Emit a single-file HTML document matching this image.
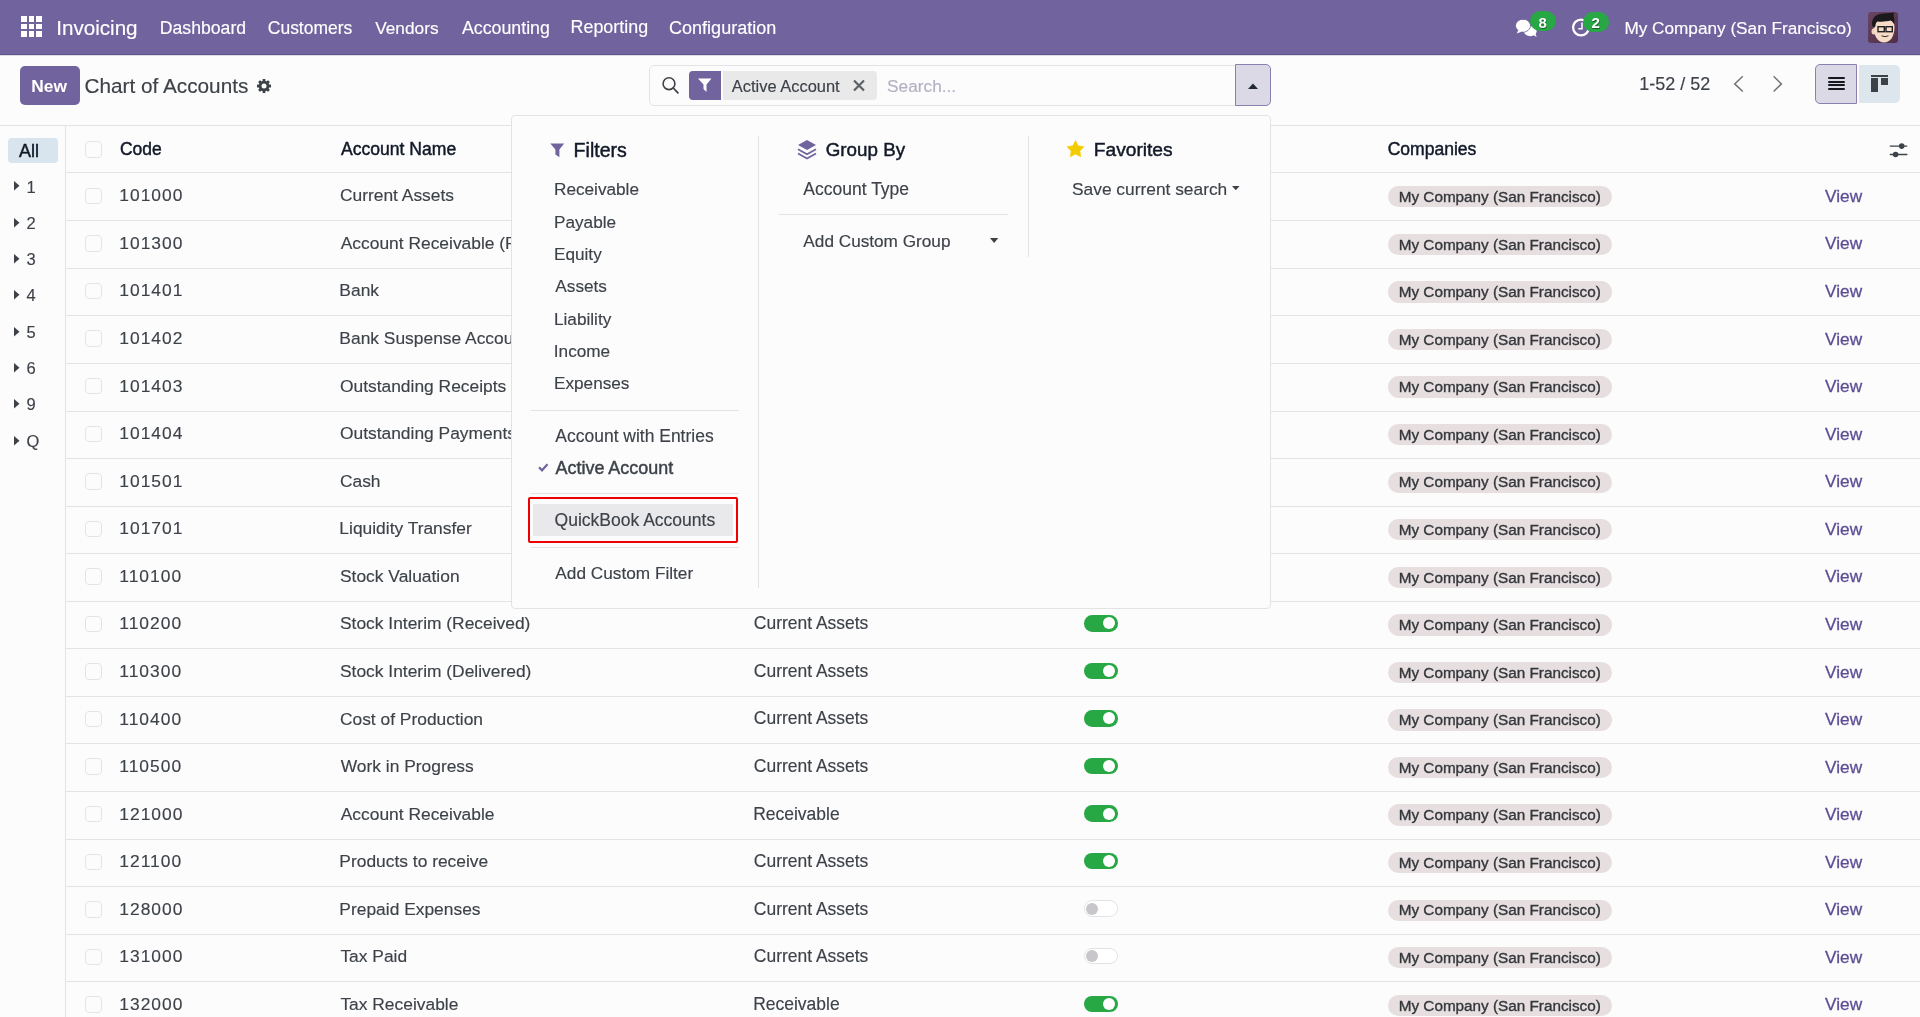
<!DOCTYPE html><html><head><meta charset="utf-8"><style>
html,body{margin:0;padding:0;}
body{width:1920px;height:1017px;overflow:hidden;position:relative;background:#fcfcfc;font-family:"Liberation Sans",sans-serif;}
.t{position:absolute;line-height:1;white-space:nowrap;}
.s{-webkit-text-stroke:0.15px currentColor;}
#root{position:absolute;left:0;top:0;width:1920px;height:1017px;will-change:transform;}
.r{position:absolute;box-sizing:border-box;}
svg{position:absolute;overflow:visible;}
</style></head><body><div id="root">
<div class="r" style="left:0px;top:0px;width:1920px;height:55px;background:#71639e;border-bottom:1.5px solid #5f5390;"></div>
<div class="r" style="left:0px;top:55px;width:1920px;height:1px;background:#dcdcde;"></div>
<div class="r" style="left:21.3px;top:16.3px;width:5.8px;height:5.8px;background:#fff;"></div>
<div class="r" style="left:21.3px;top:23.700000000000003px;width:5.8px;height:5.8px;background:#fff;"></div>
<div class="r" style="left:21.3px;top:31.1px;width:5.8px;height:5.8px;background:#fff;"></div>
<div class="r" style="left:28.700000000000003px;top:16.3px;width:5.8px;height:5.8px;background:#fff;"></div>
<div class="r" style="left:28.700000000000003px;top:23.700000000000003px;width:5.8px;height:5.8px;background:#fff;"></div>
<div class="r" style="left:28.700000000000003px;top:31.1px;width:5.8px;height:5.8px;background:#fff;"></div>
<div class="r" style="left:36.1px;top:16.3px;width:5.8px;height:5.8px;background:#fff;"></div>
<div class="r" style="left:36.1px;top:23.700000000000003px;width:5.8px;height:5.8px;background:#fff;"></div>
<div class="r" style="left:36.1px;top:31.1px;width:5.8px;height:5.8px;background:#fff;"></div>
<div class="t s" style="left:56.19px;top:17.74px;font-size:20.63px;color:#fff;font-weight:400;">Invoicing</div>
<div class="t s" style="left:159.84px;top:19.67px;font-size:17.64px;color:#fff;font-weight:400;">Dashboard</div>
<div class="t s" style="left:267.83px;top:19.81px;font-size:17.47px;color:#fff;font-weight:400;">Customers</div>
<div class="t s" style="left:375.21px;top:19.98px;font-size:17.27px;color:#fff;font-weight:400;">Vendors</div>
<div class="t s" style="left:461.96px;top:19.56px;font-size:17.77px;color:#fff;font-weight:400;">Accounting</div>
<div class="t s" style="left:570.52px;top:19.45px;font-size:17.9px;color:#fff;font-weight:400;">Reporting</div>
<div class="t s" style="left:669.1px;top:19.36px;font-size:18.0px;color:#fff;font-weight:400;">Configuration</div>
<svg style="left:1515px;top:17px" width="23" height="21" viewBox="0 0 23 21">
<ellipse cx="15.300" cy="14.200" rx="6.300" ry="5" fill="#fff"/>
<path d="M17.500 17.500L21.700 19.900 20.200 16z" fill="#fff"/>
<ellipse cx="8" cy="8.700" rx="7.400" ry="6.400" fill="#fff" stroke="#71639e" stroke-width="0.900"/>
<path d="M3.300 13.200L1.700 16.600 7 14.600z" fill="#fff"/>
<ellipse cx="8" cy="8.700" rx="6.800" ry="5.800" fill="#fff"/>
</svg>
<div class="r" style="left:1530px;top:11px;width:26px;height:20px;background:#28a745;border-radius:10px;"></div>
<div class="t" style="left:1538.51px;top:14.68px;font-size:15.03px;color:#fff;font-weight:700;text-shadow:0.6px 0.9px 0 #155d27;">8</div>
<svg style="left:1572px;top:18px" width="19" height="19" viewBox="0 0 19 19">
<circle cx="9" cy="9.500" r="7.900" fill="none" stroke="#fff" stroke-width="2.300"/>
<path d="M10 4.400v6.300H6.300" fill="none" stroke="#fff" stroke-width="1.500"/>
</svg>
<div class="r" style="left:1583px;top:12px;width:25.5px;height:20px;background:#28a745;border-radius:10px;"></div>
<div class="t" style="left:1591.48px;top:15.00px;font-size:15.0px;color:#fff;font-weight:700;text-shadow:0.6px 0.9px 0 #155d27;">2</div>
<div class="t s" style="left:1624.38px;top:20.14px;font-size:17.2px;color:#fff;font-weight:400;">My Company (San Francisco)</div>
<svg style="left:1868px;top:12px" width="30" height="31" viewBox="0 0 30 31">
<defs><linearGradient id="avg" x1="0" y1="0" x2="1" y2="1"><stop offset="0" stop-color="#6a4562"/><stop offset="1" stop-color="#4f2e45"/></linearGradient></defs>
<rect x="0" y="0" width="30" height="31" rx="3" fill="url(#avg)"/>
<ellipse cx="5.800" cy="19.500" rx="2.300" ry="3" fill="#f1d2bb"/>
<path d="M5.500 14C5.500 9 9 7 16 7s10.500 2 10.500 8c0 9-4 15.500-10.500 15.500S5.500 23 5.500 14z" fill="#f6dcc6"/>
<path d="M4 13C3.500 7 7 3 12 2 17 1 22 1.500 26 0.500L25.500 4C26.500 6 26.500 9 26 12 25 10 24 9 22.500 8.500 19 9.500 14 10 9.500 9.500 8 10.500 7.500 12 7.500 14L6 16C5 15 4.500 14 4 13z" fill="#1b191b"/>
<rect x="10" y="14.700" width="6.300" height="5" fill="none" stroke="#222" stroke-width="1.400"/>
<rect x="18" y="14.700" width="6.300" height="5" fill="none" stroke="#222" stroke-width="1.400"/>
<path d="M16.300 16.500h1.700" stroke="#222" stroke-width="1"/>
<path d="M13.500 23.800q3.500 1.800 7 0" fill="none" stroke="#3a2a2a" stroke-width="1"/>
</svg>
<div class="r" style="left:19.5px;top:66px;width:60.5px;height:38.7px;background:#71639e;border-radius:5px;"></div>
<div class="t" style="left:31.33px;top:78.02px;font-size:17.34px;color:#fff;font-weight:700;">New</div>
<div class="t s" style="left:84.56px;top:75.83px;font-size:20.76px;color:#3d4249;font-weight:400;">Chart of Accounts</div>
<svg style="left:256.800px;top:78.900px" width="14" height="14" viewBox="-7 -7 14 14">
<g fill="#3d4249"><circle r="5.300"/>
<rect x="-1.400" y="-7" width="2.800" height="14" rx="0.500"/>
<rect x="-1.400" y="-7" width="2.800" height="14" rx="0.500" transform="rotate(45)"/>
<rect x="-1.400" y="-7" width="2.800" height="14" rx="0.500" transform="rotate(90)"/>
<rect x="-1.400" y="-7" width="2.800" height="14" rx="0.500" transform="rotate(135)"/></g>
<circle r="2.500" fill="#fcfcfc"/>
</svg>
<div class="r" style="left:649.2px;top:64.5px;width:621.5px;height:41px;border:1px solid #e3e3e5;border-radius:5px;"></div>
<svg style="left:662px;top:77px" width="17" height="17" viewBox="0 0 17 17">
<circle cx="7" cy="6.700" r="5.900" fill="none" stroke="#3d4249" stroke-width="1.600"/>
<path d="M11.300 11l4.600 4.800" stroke="#3d4249" stroke-width="1.800" stroke-linecap="round"/>
</svg>
<div class="r" style="left:688.5px;top:70.6px;width:188.5px;height:29.5px;background:#e9e9ea;border-radius:4px;"></div>
<div class="r" style="left:721.2px;top:70.6px;width:1.8px;height:29.5px;background:#fcfcfc;"></div>
<div class="r" style="left:688.5px;top:70.6px;width:32.7px;height:29.5px;background:#71639e;border-radius:4px 0 0 4px;"></div>
<svg style="left:697px;top:77px" width="16" height="17" viewBox="0 0 16 17">
<path d="M1 1.500h13.500l-5 6v7.500l-3-3v-4.500z" fill="#fff"/>
</svg>
<div class="t s" style="left:731.76px;top:77.76px;font-size:16.47px;color:#3d4249;font-weight:400;">Active Account</div>
<svg style="left:853px;top:80px" width="12" height="11" viewBox="0 0 12 11">
<path d="M1 0.500l10 10M11 0.500l-10 10" stroke="#5d6166" stroke-width="2.2"/>
</svg>
<div class="t s" style="left:887.12px;top:77.60px;font-size:17.25px;color:#b3b0c2;font-weight:400;">Search...</div>
<div class="r" style="left:1235px;top:64.3px;width:35.8px;height:41.4px;background:#dcd9e6;border:1.2px solid #8a80b0;border-radius:0 5px 5px 0;"></div>
<svg style="left:1247.8px;top:82.9px" width="10" height="6" viewBox="0 0 10 6">
<path d="M0 6L5 0.500 10 6z" fill="#1f2937"/>
</svg>
<div class="t s" style="left:1639.25px;top:75.59px;font-size:17.97px;color:#3d4249;font-weight:400;">1-52 / 52</div>
<svg style="left:1733.5px;top:76px" width="10" height="16" viewBox="0 0 10 16">
<path d="M8.800 0.300L0.700 7.900 8.800 15.500" fill="none" stroke="#747474" stroke-width="1.500"/>
</svg>
<svg style="left:1772.500px;top:76px" width="10" height="16" viewBox="0 0 10 16">
<path d="M0.600 0.300L8.400 7.900 0.600 15.500" fill="none" stroke="#747474" stroke-width="1.500"/>
</svg>
<div class="r" style="left:1815px;top:64.4px;width:42px;height:39.4px;background:#dcd9e6;border:1.2px solid #8a80b0;border-radius:5px 0 0 5px;"></div>
<div class="r" style="left:1827.6px;top:77.0px;width:17px;height:1.9px;background:#15191e;border-radius:1px;"></div>
<div class="r" style="left:1827.6px;top:80.65px;width:17px;height:1.9px;background:#15191e;border-radius:1px;"></div>
<div class="r" style="left:1827.6px;top:84.3px;width:17px;height:1.9px;background:#15191e;border-radius:1px;"></div>
<div class="r" style="left:1827.6px;top:87.95px;width:17px;height:1.9px;background:#15191e;border-radius:1px;"></div>
<div class="r" style="left:1858.5px;top:65.3px;width:41.5px;height:37.7px;background:#dde5ed;border-radius:0 5px 5px 0;"></div>
<div class="r" style="left:1871px;top:75px;width:17.3px;height:1.5px;background:#3d4249;"></div>
<div class="r" style="left:1871px;top:77.5px;width:7px;height:14.5px;background:#3d4249;"></div>
<div class="r" style="left:1880.5px;top:77.5px;width:7.8px;height:7.5px;background:#3d4249;"></div>
<div class="r" style="left:0px;top:125px;width:1920px;height:1px;background:#e3e3e5;"></div>
<div class="r" style="left:65px;top:125px;width:1px;height:900px;background:#e3e3e5;"></div>
<div class="r" style="left:8.1px;top:138.1px;width:49.8px;height:24.6px;background:#d8e4ee;border-radius:4px;"></div>
<div class="t" style="left:19.08px;top:142.07px;font-size:17.99px;color:#111827;font-weight:400;-webkit-text-stroke:0.45px #111827;">All</div>
<svg style="left:14px;top:181.40px" width="6" height="10" viewBox="0 0 6 10"><path d="M0 0l5.500 4.700L0 9.400z" fill="#3d4249"/></svg>
<div class="t s" style="left:26.5px;top:178.53px;font-size:16.5px;color:#3d4249;font-weight:400;">1</div>
<svg style="left:14px;top:217.70px" width="6" height="10" viewBox="0 0 6 10"><path d="M0 0l5.500 4.700L0 9.400z" fill="#3d4249"/></svg>
<div class="t s" style="left:26.5px;top:214.83px;font-size:16.5px;color:#3d4249;font-weight:400;">2</div>
<svg style="left:14px;top:254.00px" width="6" height="10" viewBox="0 0 6 10"><path d="M0 0l5.500 4.700L0 9.400z" fill="#3d4249"/></svg>
<div class="t s" style="left:26.5px;top:251.13px;font-size:16.5px;color:#3d4249;font-weight:400;">3</div>
<svg style="left:14px;top:290.30px" width="6" height="10" viewBox="0 0 6 10"><path d="M0 0l5.500 4.700L0 9.400z" fill="#3d4249"/></svg>
<div class="t s" style="left:26.5px;top:287.43px;font-size:16.5px;color:#3d4249;font-weight:400;">4</div>
<svg style="left:14px;top:326.60px" width="6" height="10" viewBox="0 0 6 10"><path d="M0 0l5.500 4.700L0 9.400z" fill="#3d4249"/></svg>
<div class="t s" style="left:26.5px;top:323.73px;font-size:16.5px;color:#3d4249;font-weight:400;">5</div>
<svg style="left:14px;top:362.90px" width="6" height="10" viewBox="0 0 6 10"><path d="M0 0l5.500 4.700L0 9.400z" fill="#3d4249"/></svg>
<div class="t s" style="left:26.5px;top:360.03px;font-size:16.5px;color:#3d4249;font-weight:400;">6</div>
<svg style="left:14px;top:399.20px" width="6" height="10" viewBox="0 0 6 10"><path d="M0 0l5.500 4.700L0 9.400z" fill="#3d4249"/></svg>
<div class="t s" style="left:26.5px;top:396.33px;font-size:16.5px;color:#3d4249;font-weight:400;">9</div>
<svg style="left:14px;top:435.50px" width="6" height="10" viewBox="0 0 6 10"><path d="M0 0l5.500 4.700L0 9.400z" fill="#3d4249"/></svg>
<div class="t s" style="left:26.5px;top:432.63px;font-size:16.5px;color:#3d4249;font-weight:400;">Q</div>
<div class="r" style="left:66px;top:172.2px;width:1854px;height:1px;background:#e3e3e5;"></div>
<div class="r" style="left:85px;top:141px;width:16.5px;height:16.5px;border:1px solid #e4e4e6;border-radius:4px;"></div>
<div class="t" style="left:119.95px;top:141.30px;font-size:17.48px;color:#111827;font-weight:400;-webkit-text-stroke:0.45px #111827;">Code</div>
<div class="t" style="left:340.98px;top:141.23px;font-size:17.57px;color:#111827;font-weight:400;-webkit-text-stroke:0.45px #111827;">Account Name</div>
<div class="t" style="left:754.7px;top:142.22px;font-size:16.4px;color:#111827;font-weight:700;">Type</div>
<div class="t" style="left:1083px;top:142.22px;font-size:16.4px;color:#111827;font-weight:700;">Allow Reconciliation</div>
<div class="t" style="left:1387.64px;top:141.24px;font-size:17.55px;color:#111827;font-weight:400;-webkit-text-stroke:0.45px #111827;">Companies</div>
<svg style="left:1890px;top:142.500px" width="17.500" height="15" viewBox="0 0 17.500 15">
<path d="M0.300 3.100h16.500M0.300 11.500h16.500" stroke="#3d4249" stroke-width="1.400" stroke-linecap="round"/>
<circle cx="11.700" cy="3.100" r="2.800" fill="#3d4249"/><circle cx="5.600" cy="11.500" r="2.800" fill="#3d4249"/>
</svg>
<div class="r" style="left:66px;top:220.26px;width:1854px;height:1px;background:#e3e3e5;"></div>
<div class="r" style="left:85px;top:187.7px;width:16.5px;height:16.5px;border:1px solid #e4e4e6;border-radius:4px;"></div>
<div class="t s" style="left:119.29px;top:187.37px;font-size:17.4px;color:#3d4249;font-weight:400;letter-spacing:1.02px;">101000</div>
<div class="t s" style="left:339.93px;top:187.37px;font-size:17.4px;color:#3d4249;font-weight:400;">Current Assets</div>
<div class="t s" style="left:753.83px;top:187.33px;font-size:17.45px;color:#3d4249;font-weight:400;">Current Assets</div>
<div class="r" style="left:1083.7px;top:187.0px;width:34px;height:16.5px;background:#28a745;border-radius:8.25px;"></div>
<div class="r" style="left:1103.3px;top:189.25px;width:12px;height:12px;background:#fff;border-radius:50%;"></div>
<div class="r" style="left:1388.3px;top:186.2px;width:224px;height:21.3px;background:#e7dfdf;border-radius:11px;"></div>
<div class="t s" style="left:1398.74px;top:189.06px;font-size:15.29px;color:#33373c;font-weight:400;-webkit-text-stroke:0.35px #33373c;">My Company (San Francisco)</div>
<div class="t s" style="left:1825.11px;top:187.91px;font-size:17.23px;color:#5d4d95;font-weight:400;-webkit-text-stroke:0.3px #5d4d95;">View</div>
<div class="r" style="left:66px;top:267.82px;width:1854px;height:1px;background:#e3e3e5;"></div>
<div class="r" style="left:85px;top:235.26px;width:16.5px;height:16.5px;border:1px solid #e4e4e6;border-radius:4px;"></div>
<div class="t s" style="left:119.29px;top:234.93px;font-size:17.4px;color:#3d4249;font-weight:400;letter-spacing:1.02px;">101300</div>
<div class="t s" style="left:340.76px;top:234.93px;font-size:17.4px;color:#3d4249;font-weight:400;">Account Receivable (PoS)</div>
<div class="t s" style="left:753.26px;top:234.89px;font-size:17.45px;color:#3d4249;font-weight:400;">Receivable</div>
<div class="r" style="left:1083.7px;top:234.56px;width:34px;height:16.5px;background:#28a745;border-radius:8.25px;"></div>
<div class="r" style="left:1103.3px;top:236.81px;width:12px;height:12px;background:#fff;border-radius:50%;"></div>
<div class="r" style="left:1388.3px;top:233.76px;width:224px;height:21.3px;background:#e7dfdf;border-radius:11px;"></div>
<div class="t s" style="left:1398.74px;top:236.62px;font-size:15.29px;color:#33373c;font-weight:400;-webkit-text-stroke:0.35px #33373c;">My Company (San Francisco)</div>
<div class="t s" style="left:1825.11px;top:235.47px;font-size:17.23px;color:#5d4d95;font-weight:400;-webkit-text-stroke:0.3px #5d4d95;">View</div>
<div class="r" style="left:66px;top:315.38px;width:1854px;height:1px;background:#e3e3e5;"></div>
<div class="r" style="left:85px;top:282.82px;width:16.5px;height:16.5px;border:1px solid #e4e4e6;border-radius:4px;"></div>
<div class="t s" style="left:119.29px;top:282.49px;font-size:17.4px;color:#3d4249;font-weight:400;letter-spacing:1.02px;">101401</div>
<div class="t s" style="left:339.36px;top:282.49px;font-size:17.4px;color:#3d4249;font-weight:400;">Bank</div>
<div class="t s" style="left:753.26px;top:282.45px;font-size:17.45px;color:#3d4249;font-weight:400;">Bank and Cash</div>
<div class="r" style="left:1083.7px;top:282.12px;width:34px;height:16.5px;background:#28a745;border-radius:8.25px;"></div>
<div class="r" style="left:1103.3px;top:284.37px;width:12px;height:12px;background:#fff;border-radius:50%;"></div>
<div class="r" style="left:1388.3px;top:281.32px;width:224px;height:21.3px;background:#e7dfdf;border-radius:11px;"></div>
<div class="t s" style="left:1398.74px;top:284.18px;font-size:15.29px;color:#33373c;font-weight:400;-webkit-text-stroke:0.35px #33373c;">My Company (San Francisco)</div>
<div class="t s" style="left:1825.11px;top:283.03px;font-size:17.23px;color:#5d4d95;font-weight:400;-webkit-text-stroke:0.3px #5d4d95;">View</div>
<div class="r" style="left:66px;top:362.94px;width:1854px;height:1px;background:#e3e3e5;"></div>
<div class="r" style="left:85px;top:330.38px;width:16.5px;height:16.5px;border:1px solid #e4e4e6;border-radius:4px;"></div>
<div class="t s" style="left:119.29px;top:330.05px;font-size:17.4px;color:#3d4249;font-weight:400;letter-spacing:1.02px;">101402</div>
<div class="t s" style="left:339.36px;top:330.05px;font-size:17.4px;color:#3d4249;font-weight:400;">Bank Suspense Account</div>
<div class="t s" style="left:753.83px;top:330.01px;font-size:17.45px;color:#3d4249;font-weight:400;">Current Assets</div>
<div class="r" style="left:1083.7px;top:329.68px;width:34px;height:16.5px;background:#28a745;border-radius:8.25px;"></div>
<div class="r" style="left:1103.3px;top:331.93px;width:12px;height:12px;background:#fff;border-radius:50%;"></div>
<div class="r" style="left:1388.3px;top:328.88px;width:224px;height:21.3px;background:#e7dfdf;border-radius:11px;"></div>
<div class="t s" style="left:1398.74px;top:331.74px;font-size:15.29px;color:#33373c;font-weight:400;-webkit-text-stroke:0.35px #33373c;">My Company (San Francisco)</div>
<div class="t s" style="left:1825.11px;top:330.59px;font-size:17.23px;color:#5d4d95;font-weight:400;-webkit-text-stroke:0.3px #5d4d95;">View</div>
<div class="r" style="left:66px;top:410.5px;width:1854px;height:1px;background:#e3e3e5;"></div>
<div class="r" style="left:85px;top:377.94px;width:16.5px;height:16.5px;border:1px solid #e4e4e6;border-radius:4px;"></div>
<div class="t s" style="left:119.29px;top:377.61px;font-size:17.4px;color:#3d4249;font-weight:400;letter-spacing:1.02px;">101403</div>
<div class="t s" style="left:339.97px;top:377.61px;font-size:17.4px;color:#3d4249;font-weight:400;">Outstanding Receipts</div>
<div class="t s" style="left:753.83px;top:377.57px;font-size:17.45px;color:#3d4249;font-weight:400;">Current Assets</div>
<div class="r" style="left:1083.7px;top:377.24px;width:34px;height:16.5px;background:#28a745;border-radius:8.25px;"></div>
<div class="r" style="left:1103.3px;top:379.49px;width:12px;height:12px;background:#fff;border-radius:50%;"></div>
<div class="r" style="left:1388.3px;top:376.44px;width:224px;height:21.3px;background:#e7dfdf;border-radius:11px;"></div>
<div class="t s" style="left:1398.74px;top:379.30px;font-size:15.29px;color:#33373c;font-weight:400;-webkit-text-stroke:0.35px #33373c;">My Company (San Francisco)</div>
<div class="t s" style="left:1825.11px;top:378.15px;font-size:17.23px;color:#5d4d95;font-weight:400;-webkit-text-stroke:0.3px #5d4d95;">View</div>
<div class="r" style="left:66px;top:458.06px;width:1854px;height:1px;background:#e3e3e5;"></div>
<div class="r" style="left:85px;top:425.5px;width:16.5px;height:16.5px;border:1px solid #e4e4e6;border-radius:4px;"></div>
<div class="t s" style="left:119.29px;top:425.17px;font-size:17.4px;color:#3d4249;font-weight:400;letter-spacing:1.02px;">101404</div>
<div class="t s" style="left:339.97px;top:425.17px;font-size:17.4px;color:#3d4249;font-weight:400;">Outstanding Payments</div>
<div class="t s" style="left:753.83px;top:425.13px;font-size:17.45px;color:#3d4249;font-weight:400;">Current Assets</div>
<div class="r" style="left:1083.7px;top:424.8px;width:34px;height:16.5px;background:#28a745;border-radius:8.25px;"></div>
<div class="r" style="left:1103.3px;top:427.05px;width:12px;height:12px;background:#fff;border-radius:50%;"></div>
<div class="r" style="left:1388.3px;top:424.0px;width:224px;height:21.3px;background:#e7dfdf;border-radius:11px;"></div>
<div class="t s" style="left:1398.74px;top:426.86px;font-size:15.29px;color:#33373c;font-weight:400;-webkit-text-stroke:0.35px #33373c;">My Company (San Francisco)</div>
<div class="t s" style="left:1825.11px;top:425.71px;font-size:17.23px;color:#5d4d95;font-weight:400;-webkit-text-stroke:0.3px #5d4d95;">View</div>
<div class="r" style="left:66px;top:505.62px;width:1854px;height:1px;background:#e3e3e5;"></div>
<div class="r" style="left:85px;top:473.06px;width:16.5px;height:16.5px;border:1px solid #e4e4e6;border-radius:4px;"></div>
<div class="t s" style="left:119.29px;top:472.73px;font-size:17.4px;color:#3d4249;font-weight:400;letter-spacing:1.02px;">101501</div>
<div class="t s" style="left:339.93px;top:472.73px;font-size:17.4px;color:#3d4249;font-weight:400;">Cash</div>
<div class="t s" style="left:753.26px;top:472.69px;font-size:17.45px;color:#3d4249;font-weight:400;">Bank and Cash</div>
<div class="r" style="left:1083.7px;top:472.36px;width:34px;height:16.5px;background:#28a745;border-radius:8.25px;"></div>
<div class="r" style="left:1103.3px;top:474.61px;width:12px;height:12px;background:#fff;border-radius:50%;"></div>
<div class="r" style="left:1388.3px;top:471.56px;width:224px;height:21.3px;background:#e7dfdf;border-radius:11px;"></div>
<div class="t s" style="left:1398.74px;top:474.42px;font-size:15.29px;color:#33373c;font-weight:400;-webkit-text-stroke:0.35px #33373c;">My Company (San Francisco)</div>
<div class="t s" style="left:1825.11px;top:473.27px;font-size:17.23px;color:#5d4d95;font-weight:400;-webkit-text-stroke:0.3px #5d4d95;">View</div>
<div class="r" style="left:66px;top:553.1800000000001px;width:1854px;height:1px;background:#e3e3e5;"></div>
<div class="r" style="left:85px;top:520.62px;width:16.5px;height:16.5px;border:1px solid #e4e4e6;border-radius:4px;"></div>
<div class="t s" style="left:119.29px;top:520.29px;font-size:17.4px;color:#3d4249;font-weight:400;letter-spacing:1.02px;">101701</div>
<div class="t s" style="left:339.36px;top:520.29px;font-size:17.4px;color:#3d4249;font-weight:400;">Liquidity Transfer</div>
<div class="t s" style="left:753.83px;top:520.25px;font-size:17.45px;color:#3d4249;font-weight:400;">Current Assets</div>
<div class="r" style="left:1083.7px;top:519.92px;width:34px;height:16.5px;background:#28a745;border-radius:8.25px;"></div>
<div class="r" style="left:1103.3px;top:522.17px;width:12px;height:12px;background:#fff;border-radius:50%;"></div>
<div class="r" style="left:1388.3px;top:519.12px;width:224px;height:21.3px;background:#e7dfdf;border-radius:11px;"></div>
<div class="t s" style="left:1398.74px;top:521.98px;font-size:15.29px;color:#33373c;font-weight:400;-webkit-text-stroke:0.35px #33373c;">My Company (San Francisco)</div>
<div class="t s" style="left:1825.11px;top:520.83px;font-size:17.23px;color:#5d4d95;font-weight:400;-webkit-text-stroke:0.3px #5d4d95;">View</div>
<div class="r" style="left:66px;top:600.74px;width:1854px;height:1px;background:#e3e3e5;"></div>
<div class="r" style="left:85px;top:568.1800000000001px;width:16.5px;height:16.5px;border:1px solid #e4e4e6;border-radius:4px;"></div>
<div class="t s" style="left:119.29px;top:567.85px;font-size:17.4px;color:#3d4249;font-weight:400;letter-spacing:1.02px;">110100</div>
<div class="t s" style="left:340.02px;top:567.85px;font-size:17.4px;color:#3d4249;font-weight:400;">Stock Valuation</div>
<div class="t s" style="left:753.83px;top:567.81px;font-size:17.45px;color:#3d4249;font-weight:400;">Current Assets</div>
<div class="r" style="left:1083.7px;top:567.48px;width:34px;height:16.5px;background:#28a745;border-radius:8.25px;"></div>
<div class="r" style="left:1103.3px;top:569.73px;width:12px;height:12px;background:#fff;border-radius:50%;"></div>
<div class="r" style="left:1388.3px;top:566.6800000000001px;width:224px;height:21.3px;background:#e7dfdf;border-radius:11px;"></div>
<div class="t s" style="left:1398.74px;top:569.54px;font-size:15.29px;color:#33373c;font-weight:400;-webkit-text-stroke:0.35px #33373c;">My Company (San Francisco)</div>
<div class="t s" style="left:1825.11px;top:568.39px;font-size:17.23px;color:#5d4d95;font-weight:400;-webkit-text-stroke:0.3px #5d4d95;">View</div>
<div class="r" style="left:66px;top:648.3px;width:1854px;height:1px;background:#e3e3e5;"></div>
<div class="r" style="left:85px;top:615.74px;width:16.5px;height:16.5px;border:1px solid #e4e4e6;border-radius:4px;"></div>
<div class="t s" style="left:119.29px;top:615.41px;font-size:17.4px;color:#3d4249;font-weight:400;letter-spacing:1.02px;">110200</div>
<div class="t s" style="left:340.02px;top:615.41px;font-size:17.4px;color:#3d4249;font-weight:400;">Stock Interim (Received)</div>
<div class="t s" style="left:753.83px;top:615.37px;font-size:17.45px;color:#3d4249;font-weight:400;">Current Assets</div>
<div class="r" style="left:1083.7px;top:615.04px;width:34px;height:16.5px;background:#28a745;border-radius:8.25px;"></div>
<div class="r" style="left:1103.3px;top:617.29px;width:12px;height:12px;background:#fff;border-radius:50%;"></div>
<div class="r" style="left:1388.3px;top:614.24px;width:224px;height:21.3px;background:#e7dfdf;border-radius:11px;"></div>
<div class="t s" style="left:1398.74px;top:617.10px;font-size:15.29px;color:#33373c;font-weight:400;-webkit-text-stroke:0.35px #33373c;">My Company (San Francisco)</div>
<div class="t s" style="left:1825.11px;top:615.95px;font-size:17.23px;color:#5d4d95;font-weight:400;-webkit-text-stroke:0.3px #5d4d95;">View</div>
<div class="r" style="left:66px;top:695.8599999999999px;width:1854px;height:1px;background:#e3e3e5;"></div>
<div class="r" style="left:85px;top:663.3px;width:16.5px;height:16.5px;border:1px solid #e4e4e6;border-radius:4px;"></div>
<div class="t s" style="left:119.29px;top:662.97px;font-size:17.4px;color:#3d4249;font-weight:400;letter-spacing:1.02px;">110300</div>
<div class="t s" style="left:340.02px;top:662.97px;font-size:17.4px;color:#3d4249;font-weight:400;">Stock Interim (Delivered)</div>
<div class="t s" style="left:753.83px;top:662.93px;font-size:17.45px;color:#3d4249;font-weight:400;">Current Assets</div>
<div class="r" style="left:1083.7px;top:662.5999999999999px;width:34px;height:16.5px;background:#28a745;border-radius:8.25px;"></div>
<div class="r" style="left:1103.3px;top:664.8499999999999px;width:12px;height:12px;background:#fff;border-radius:50%;"></div>
<div class="r" style="left:1388.3px;top:661.8px;width:224px;height:21.3px;background:#e7dfdf;border-radius:11px;"></div>
<div class="t s" style="left:1398.74px;top:664.66px;font-size:15.29px;color:#33373c;font-weight:400;-webkit-text-stroke:0.35px #33373c;">My Company (San Francisco)</div>
<div class="t s" style="left:1825.11px;top:663.51px;font-size:17.23px;color:#5d4d95;font-weight:400;-webkit-text-stroke:0.3px #5d4d95;">View</div>
<div class="r" style="left:66px;top:743.4200000000001px;width:1854px;height:1px;background:#e3e3e5;"></div>
<div class="r" style="left:85px;top:710.8600000000001px;width:16.5px;height:16.5px;border:1px solid #e4e4e6;border-radius:4px;"></div>
<div class="t s" style="left:119.29px;top:710.53px;font-size:17.4px;color:#3d4249;font-weight:400;letter-spacing:1.02px;">110400</div>
<div class="t s" style="left:339.93px;top:710.53px;font-size:17.4px;color:#3d4249;font-weight:400;">Cost of Production</div>
<div class="t s" style="left:753.83px;top:710.49px;font-size:17.45px;color:#3d4249;font-weight:400;">Current Assets</div>
<div class="r" style="left:1083.7px;top:710.1600000000001px;width:34px;height:16.5px;background:#28a745;border-radius:8.25px;"></div>
<div class="r" style="left:1103.3px;top:712.4100000000001px;width:12px;height:12px;background:#fff;border-radius:50%;"></div>
<div class="r" style="left:1388.3px;top:709.3600000000001px;width:224px;height:21.3px;background:#e7dfdf;border-radius:11px;"></div>
<div class="t s" style="left:1398.74px;top:712.22px;font-size:15.29px;color:#33373c;font-weight:400;-webkit-text-stroke:0.35px #33373c;">My Company (San Francisco)</div>
<div class="t s" style="left:1825.11px;top:711.07px;font-size:17.23px;color:#5d4d95;font-weight:400;-webkit-text-stroke:0.3px #5d4d95;">View</div>
<div class="r" style="left:66px;top:790.98px;width:1854px;height:1px;background:#e3e3e5;"></div>
<div class="r" style="left:85px;top:758.4200000000001px;width:16.5px;height:16.5px;border:1px solid #e4e4e6;border-radius:4px;"></div>
<div class="t s" style="left:119.29px;top:758.09px;font-size:17.4px;color:#3d4249;font-weight:400;letter-spacing:1.02px;">110500</div>
<div class="t s" style="left:340.71px;top:758.09px;font-size:17.4px;color:#3d4249;font-weight:400;">Work in Progress</div>
<div class="t s" style="left:753.83px;top:758.05px;font-size:17.45px;color:#3d4249;font-weight:400;">Current Assets</div>
<div class="r" style="left:1083.7px;top:757.72px;width:34px;height:16.5px;background:#28a745;border-radius:8.25px;"></div>
<div class="r" style="left:1103.3px;top:759.97px;width:12px;height:12px;background:#fff;border-radius:50%;"></div>
<div class="r" style="left:1388.3px;top:756.9200000000001px;width:224px;height:21.3px;background:#e7dfdf;border-radius:11px;"></div>
<div class="t s" style="left:1398.74px;top:759.78px;font-size:15.29px;color:#33373c;font-weight:400;-webkit-text-stroke:0.35px #33373c;">My Company (San Francisco)</div>
<div class="t s" style="left:1825.11px;top:758.63px;font-size:17.23px;color:#5d4d95;font-weight:400;-webkit-text-stroke:0.3px #5d4d95;">View</div>
<div class="r" style="left:66px;top:838.54px;width:1854px;height:1px;background:#e3e3e5;"></div>
<div class="r" style="left:85px;top:805.98px;width:16.5px;height:16.5px;border:1px solid #e4e4e6;border-radius:4px;"></div>
<div class="t s" style="left:119.29px;top:805.65px;font-size:17.4px;color:#3d4249;font-weight:400;letter-spacing:1.02px;">121000</div>
<div class="t s" style="left:340.76px;top:805.65px;font-size:17.4px;color:#3d4249;font-weight:400;">Account Receivable</div>
<div class="t s" style="left:753.26px;top:805.61px;font-size:17.45px;color:#3d4249;font-weight:400;">Receivable</div>
<div class="r" style="left:1083.7px;top:805.28px;width:34px;height:16.5px;background:#28a745;border-radius:8.25px;"></div>
<div class="r" style="left:1103.3px;top:807.53px;width:12px;height:12px;background:#fff;border-radius:50%;"></div>
<div class="r" style="left:1388.3px;top:804.48px;width:224px;height:21.3px;background:#e7dfdf;border-radius:11px;"></div>
<div class="t s" style="left:1398.74px;top:807.34px;font-size:15.29px;color:#33373c;font-weight:400;-webkit-text-stroke:0.35px #33373c;">My Company (San Francisco)</div>
<div class="t s" style="left:1825.11px;top:806.19px;font-size:17.23px;color:#5d4d95;font-weight:400;-webkit-text-stroke:0.3px #5d4d95;">View</div>
<div class="r" style="left:66px;top:886.0999999999999px;width:1854px;height:1px;background:#e3e3e5;"></div>
<div class="r" style="left:85px;top:853.54px;width:16.5px;height:16.5px;border:1px solid #e4e4e6;border-radius:4px;"></div>
<div class="t s" style="left:119.29px;top:853.21px;font-size:17.4px;color:#3d4249;font-weight:400;letter-spacing:1.02px;">121100</div>
<div class="t s" style="left:339.36px;top:853.21px;font-size:17.4px;color:#3d4249;font-weight:400;">Products to receive</div>
<div class="t s" style="left:753.83px;top:853.17px;font-size:17.45px;color:#3d4249;font-weight:400;">Current Assets</div>
<div class="r" style="left:1083.7px;top:852.8399999999999px;width:34px;height:16.5px;background:#28a745;border-radius:8.25px;"></div>
<div class="r" style="left:1103.3px;top:855.0899999999999px;width:12px;height:12px;background:#fff;border-radius:50%;"></div>
<div class="r" style="left:1388.3px;top:852.04px;width:224px;height:21.3px;background:#e7dfdf;border-radius:11px;"></div>
<div class="t s" style="left:1398.74px;top:854.90px;font-size:15.29px;color:#33373c;font-weight:400;-webkit-text-stroke:0.35px #33373c;">My Company (San Francisco)</div>
<div class="t s" style="left:1825.11px;top:853.75px;font-size:17.23px;color:#5d4d95;font-weight:400;-webkit-text-stroke:0.3px #5d4d95;">View</div>
<div class="r" style="left:66px;top:933.6600000000001px;width:1854px;height:1px;background:#e3e3e5;"></div>
<div class="r" style="left:85px;top:901.1000000000001px;width:16.5px;height:16.5px;border:1px solid #e4e4e6;border-radius:4px;"></div>
<div class="t s" style="left:119.29px;top:900.77px;font-size:17.4px;color:#3d4249;font-weight:400;letter-spacing:1.02px;">128000</div>
<div class="t s" style="left:339.36px;top:900.77px;font-size:17.4px;color:#3d4249;font-weight:400;">Prepaid Expenses</div>
<div class="t s" style="left:753.83px;top:900.73px;font-size:17.45px;color:#3d4249;font-weight:400;">Current Assets</div>
<div class="r" style="left:1083.7px;top:900.4000000000001px;width:34px;height:16.5px;border:1px solid #e3e3e5;border-radius:8.25px;background:#fff;"></div>
<div class="r" style="left:1086.3px;top:902.6500000000001px;width:12px;height:12px;background:#c8c6cb;border-radius:50%;"></div>
<div class="r" style="left:1388.3px;top:899.6000000000001px;width:224px;height:21.3px;background:#e7dfdf;border-radius:11px;"></div>
<div class="t s" style="left:1398.74px;top:902.46px;font-size:15.29px;color:#33373c;font-weight:400;-webkit-text-stroke:0.35px #33373c;">My Company (San Francisco)</div>
<div class="t s" style="left:1825.11px;top:901.31px;font-size:17.23px;color:#5d4d95;font-weight:400;-webkit-text-stroke:0.3px #5d4d95;">View</div>
<div class="r" style="left:66px;top:981.22px;width:1854px;height:1px;background:#e3e3e5;"></div>
<div class="r" style="left:85px;top:948.6600000000001px;width:16.5px;height:16.5px;border:1px solid #e4e4e6;border-radius:4px;"></div>
<div class="t s" style="left:119.29px;top:948.33px;font-size:17.4px;color:#3d4249;font-weight:400;letter-spacing:1.02px;">131000</div>
<div class="t s" style="left:340.41px;top:948.33px;font-size:17.4px;color:#3d4249;font-weight:400;">Tax Paid</div>
<div class="t s" style="left:753.83px;top:948.29px;font-size:17.45px;color:#3d4249;font-weight:400;">Current Assets</div>
<div class="r" style="left:1083.7px;top:947.96px;width:34px;height:16.5px;border:1px solid #e3e3e5;border-radius:8.25px;background:#fff;"></div>
<div class="r" style="left:1086.3px;top:950.21px;width:12px;height:12px;background:#c8c6cb;border-radius:50%;"></div>
<div class="r" style="left:1388.3px;top:947.1600000000001px;width:224px;height:21.3px;background:#e7dfdf;border-radius:11px;"></div>
<div class="t s" style="left:1398.74px;top:950.02px;font-size:15.29px;color:#33373c;font-weight:400;-webkit-text-stroke:0.35px #33373c;">My Company (San Francisco)</div>
<div class="t s" style="left:1825.11px;top:948.87px;font-size:17.23px;color:#5d4d95;font-weight:400;-webkit-text-stroke:0.3px #5d4d95;">View</div>
<div class="r" style="left:66px;top:1028.78px;width:1854px;height:1px;background:#e3e3e5;"></div>
<div class="r" style="left:85px;top:996.22px;width:16.5px;height:16.5px;border:1px solid #e4e4e6;border-radius:4px;"></div>
<div class="t s" style="left:119.29px;top:995.89px;font-size:17.4px;color:#3d4249;font-weight:400;letter-spacing:1.02px;">132000</div>
<div class="t s" style="left:340.41px;top:995.89px;font-size:17.4px;color:#3d4249;font-weight:400;">Tax Receivable</div>
<div class="t s" style="left:753.26px;top:995.85px;font-size:17.45px;color:#3d4249;font-weight:400;">Receivable</div>
<div class="r" style="left:1083.7px;top:995.52px;width:34px;height:16.5px;background:#28a745;border-radius:8.25px;"></div>
<div class="r" style="left:1103.3px;top:997.77px;width:12px;height:12px;background:#fff;border-radius:50%;"></div>
<div class="r" style="left:1388.3px;top:994.72px;width:224px;height:21.3px;background:#e7dfdf;border-radius:11px;"></div>
<div class="t s" style="left:1398.74px;top:997.58px;font-size:15.29px;color:#33373c;font-weight:400;-webkit-text-stroke:0.35px #33373c;">My Company (San Francisco)</div>
<div class="t s" style="left:1825.11px;top:996.43px;font-size:17.23px;color:#5d4d95;font-weight:400;-webkit-text-stroke:0.3px #5d4d95;">View</div>
<div class="r" style="left:511.4px;top:115.4px;width:759.4px;height:493.6px;background:#fcfcfc;border:1px solid #e3e3e5;border-radius:4px;"></div>
<div class="r" style="left:757.9px;top:136px;width:1px;height:452px;background:#e3e3e5;"></div>
<div class="r" style="left:1027.9px;top:136.2px;width:1px;height:120.4px;background:#e3e3e5;"></div>
<svg style="left:549.7px;top:142.7px" width="14.500" height="14.500" viewBox="0 0 14.500 14.500">
<path d="M0.300 0.400H14.200L9.400 6.500V14.200L5.400 11.400V6.500z" fill="#71639e"/>
</svg>
<div class="t" style="left:573.61px;top:140.54px;font-size:19.56px;color:#111827;font-weight:400;-webkit-text-stroke:0.45px #111827;">Filters</div>
<div class="t s" style="left:553.98px;top:181.34px;font-size:17.2px;color:#3d4249;font-weight:400;">Receivable</div>
<div class="t s" style="left:553.98px;top:213.64px;font-size:17.2px;color:#3d4249;font-weight:400;">Payable</div>
<div class="t s" style="left:553.98px;top:245.94px;font-size:17.2px;color:#3d4249;font-weight:400;">Equity</div>
<div class="t s" style="left:555.36px;top:278.24px;font-size:17.2px;color:#3d4249;font-weight:400;">Assets</div>
<div class="t s" style="left:553.98px;top:310.54px;font-size:17.2px;color:#3d4249;font-weight:400;">Liability</div>
<div class="t s" style="left:553.81px;top:342.84px;font-size:17.2px;color:#3d4249;font-weight:400;">Income</div>
<div class="t s" style="left:553.98px;top:375.14px;font-size:17.2px;color:#3d4249;font-weight:400;">Expenses</div>
<div class="r" style="left:531px;top:409.5px;width:208px;height:1px;background:#e3e3e5;"></div>
<div class="t s" style="left:555.36px;top:428.00px;font-size:17.48px;color:#3d4249;font-weight:400;">Account with Entries</div>
<svg style="left:537.7px;top:462.900px" width="10.500" height="8.500" viewBox="0 0 10.500 8.500">
<path d="M1 4.300l3 3 5.500-6" fill="none" stroke="#71639e" stroke-width="2.200"/>
</svg>
<div class="t" style="left:555.58px;top:459.82px;font-size:17.93px;color:#3d4249;font-weight:400;-webkit-text-stroke:0.45px #3d4249;">Active Account</div>
<div class="r" style="left:531px;top:493.3px;width:208px;height:1px;background:#e3e3e5;"></div>
<div class="r" style="left:532.8px;top:504px;width:200.2px;height:32px;background:#e9e9eb;"></div>
<div class="r" style="left:528.1px;top:496.9px;width:209.8px;height:45.8px;border:2.7px solid #ee0000;border-radius:2px;"></div>
<div class="t s" style="left:554.57px;top:512.07px;font-size:17.52px;color:#3d4249;font-weight:400;">QuickBook Accounts</div>
<div class="r" style="left:531px;top:546.5px;width:208px;height:1px;background:#e3e3e5;"></div>
<div class="t s" style="left:555.36px;top:565.41px;font-size:17.23px;color:#3d4249;font-weight:400;">Add Custom Filter</div>
<svg style="left:797.900px;top:139.900px" width="18" height="19" viewBox="0 0 18 19">
<path d="M9 0L18 5 9 10 0 5z" fill="#71639e"/>
<path d="M0 9.300l9 5 9-5M0 13.500l9 5 9-5" fill="none" stroke="#71639e" stroke-width="1.800"/>
</svg>
<div class="t" style="left:825.78px;top:140.80px;font-size:18.78px;color:#111827;font-weight:400;-webkit-text-stroke:0.45px #111827;">Group By</div>
<div class="t s" style="left:803.36px;top:180.69px;font-size:17.5px;color:#3d4249;font-weight:400;">Account Type</div>
<div class="r" style="left:779px;top:214px;width:229px;height:1px;background:#e3e3e5;"></div>
<div class="t s" style="left:803.36px;top:233.22px;font-size:17.22px;color:#3d4249;font-weight:400;">Add Custom Group</div>
<svg style="left:989.900px;top:238px" width="8.300" height="5.100" viewBox="0 0 8.300 5.100"><path d="M0 0h8.300L4.150 5.100z" fill="#3d4249"/></svg>
<svg style="left:0;top:0" width="1" height="1"><polygon points="1075.50,140.60 1078.20,145.78 1083.96,146.75 1079.87,150.92 1080.73,156.70 1075.50,154.10 1070.27,156.70 1071.13,150.92 1067.04,146.75 1072.80,145.78" fill="#f3cc00" stroke="#f3cc00" stroke-width="0.6" stroke-linejoin="round"/></svg>
<div class="t" style="left:1093.74px;top:140.36px;font-size:19.19px;color:#111827;font-weight:400;-webkit-text-stroke:0.45px #111827;">Favorites</div>
<div class="t s" style="left:1072.02px;top:180.81px;font-size:17.35px;color:#3d4249;font-weight:400;">Save current search</div>
<svg style="left:1232px;top:185.700px" width="7.600" height="4.200" viewBox="0 0 7.600 4.200"><path d="M0 0h7.600L3.800 4.200z" fill="#3d4249"/></svg>
</div></body></html>
